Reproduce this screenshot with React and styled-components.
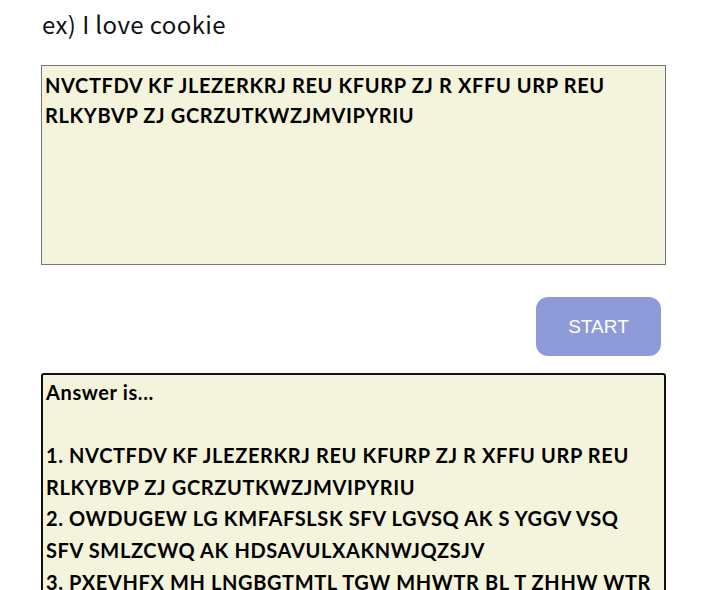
import React from "react";
import styled, { createGlobalStyle } from "styled-components";

const Global = createGlobalStyle`
  html, body { margin: 0; padding: 0; background: #fff; }
  body { font-family: "Noto Sans CJK KR", "Noto Sans", sans-serif; }
`;

const Page = styled.main`
  width: 625px;
  padding: 6px 0 0 41px;
  display: flex;
  flex-direction: column;
`;

const Title = styled.h2`
  margin: 0 0 0 1px;
  font-family: "Noto Sans CJK KR", "Noto Sans", sans-serif;
  font-weight: 400;
  font-size: 24px;
  letter-spacing: 0.4px;
  line-height: 36px;
  color: #111;
`;

const Input = styled.textarea`
  box-sizing: border-box;
  margin-top: 23px;
  width: 625px;
  height: 200px;
  padding: 4px 3px;
  border: 1px solid #767676;
  background: #f4f4dc;
  font-family: "Lato", sans-serif;
  font-weight: 700;
  font-size: 20px;
  letter-spacing: 0.62px;
  line-height: 30px;
  color: #000;
  resize: none;
  outline: none;
`;

const Actions = styled.div`
  display: flex;
  justify-content: flex-end;
  padding: 32px 5px 17px 0;
`;

const StartButton = styled.button`
  width: 125px;
  height: 59px;
  border: none;
  border-radius: 12px;
  background: #8f9bd9;
  color: #fff;
  font-family: "Liberation Sans", Arial, sans-serif;
  font-size: 19px;
  cursor: pointer;
`;

const Answer = styled.section`
  box-sizing: border-box;
  width: 625px;
  min-height: 260px;
  padding: 2px 3px;
  border: 2px solid #111;
  border-radius: 3px;
  background: #f4f4dc;
  font-family: "Lato", sans-serif;
  font-weight: 700;
  font-size: 20px;
  letter-spacing: 0.62px;
  line-height: 31.6px;
  color: #000;
  white-space: pre-wrap;
`;

const answers = [
  "NVCTFDV KF JLEZERKRJ REU KFURP ZJ R XFFU URP REU RLKYBVP ZJ GCRZUTKWZJMVIPYRIU",
  "OWDUGEW LG KMFAFSLSK SFV LGVSQ AK S YGGV VSQ SFV SMLZCWQ AK HDSAVULXAKNWJQZSJV",
  "PXEVHFX MH LNGBGTMTL TGW MHWTR BL T ZHHW WTR TGW TNMADXR BL IETBWVMYBLOXKRATKW",
];

export default function App() {
  return (
    <>
      <Global />
      <Page>
        <Title>ex) I love cookie</Title>
        <Input
          readOnly
          value="NVCTFDV KF JLEZERKRJ REU KFURP ZJ R XFFU URP REU RLKYBVP ZJ GCRZUTKWZJMVIPYRIU"
        />
        <Actions>
          <StartButton>START</StartButton>
        </Actions>
        <Answer>
          {"Answer is...\n\n" + answers.map((a, i) => `${i + 1}. ${a}`).join("\n")}
        </Answer>
      </Page>
    </>
  );
}
